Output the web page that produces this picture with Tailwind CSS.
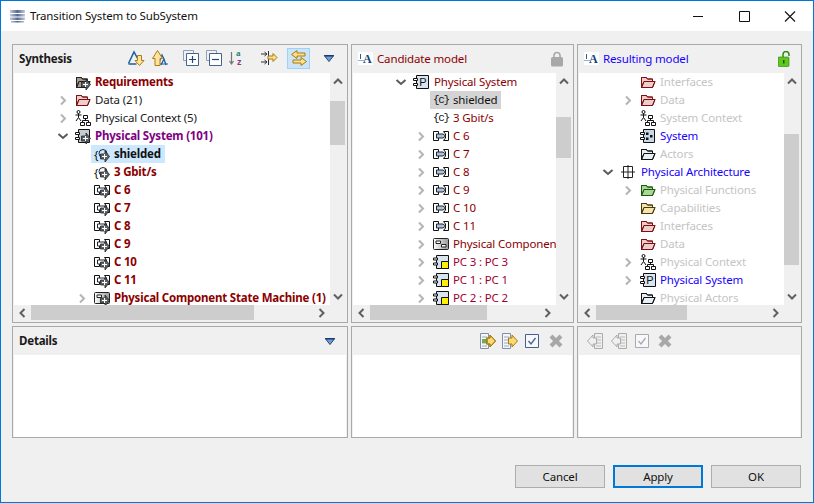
<!DOCTYPE html>
<html lang="en">
<head>
<meta charset="utf-8">
<title>Transition System to SubSystem</title>
<script src="https://cdn.jsdelivr.net/npm/@tailwindcss/browser@4"></script>
</head>
<body class="h-[503px] w-[814px] overflow-hidden border border-[#0078d7] bg-[#f0f0f0] font-['Noto_Sans',sans-serif] text-[11.5px] leading-[18px] tracking-[-0.15px] text-[#1a1a1a]">

<svg class="h-0 w-0" xmlns="http://www.w3.org/2000/svg">
  <defs>
    <linearGradient id="ti"><stop offset="0" stop-color="#c4ccdc"/><stop offset=".5" stop-color="#56688c"/><stop offset="1" stop-color="#c4ccdc"/></linearGradient>
    <linearGradient id="gs"><stop offset="0" stop-color="#fff"/><stop offset="1" stop-color="#999"/></linearGradient>
  </defs>
  <symbol id="chev-r" viewBox="0 0 16 16"><path d="M6 4.500l4 4-4 4" fill="none" stroke="#b4b4b4" stroke-width="2"/></symbol>
  <symbol id="chev-d" viewBox="0 0 16 16"><path d="M3.500 6l4.500 4 4.500-4" fill="none" stroke="#5a5a5a" stroke-width="2"/></symbol>
  <symbol id="sb-u" viewBox="0 0 16 16"><path d="M4 10l4-4 4 4" fill="none" stroke="#606060" stroke-width="2"/></symbol>
  <symbol id="sb-d" viewBox="0 0 16 16"><path d="M4 6l4 4 4-4" fill="none" stroke="#606060" stroke-width="2"/></symbol>
  <symbol id="sb-l" viewBox="0 0 16 16"><path d="M10 4L6 8l4 4" fill="none" stroke="#606060" stroke-width="2"/></symbol>
  <symbol id="sb-r" viewBox="0 0 16 16"><path d="M6 4l4 4-4 4" fill="none" stroke="#606060" stroke-width="2"/></symbol>
  <symbol id="folder" viewBox="0 0 16 16"><path d="M1.500 13.500v-10h5l1 1.500h5v2.500" fill="currentColor"/><path d="M1.500 13.500L4 7.500h11l-2.500 6z" fill="currentColor"/><path d="M1.500 13.500v-10h5l1 1.500h5v2.500M1.500 13.500L4 7.500h11l-2.500 6z" fill="none"/></symbol>
  <symbol id="ctx" viewBox="0 0 16 16"><g fill="none" stroke="#111"><circle cx="3.500" cy="2" r="1.500"/><path d="M3.500 3.500v4M.5 5h6M3.500 7.500L1 11M3.500 7.500L6 11M8.500 5.500h4v3h-4zM5.500 12.500h4v3h-4zM11.500 12.500h4v3h-4zM10.500 8.500v2M7.500 12.500v-2h6v2"/></g></symbol>
  <symbol id="ov" viewBox="0 0 16 16"><path d="M6.500 8h4.500V5l4.500 5.500L11 16v-3H6.500z" fill="#5c6468" stroke="#222" stroke-width=".8"/><path d="M8 10.500h5M10.500 8v5" stroke="#fff"/></symbol>
  <symbol id="comp" viewBox="0 0 16 16"><path d="M3.500 1.500h11v13h-11z" fill="currentColor" stroke="#111"/><path d="M.5 4.500h4v2h-4zM.5 9.500h4v2h-4z" fill="#fff" stroke="#111"/></symbol>
  <symbol id="cx" viewBox="0 0 16 16"><path d="M.5 3.500h5v9h-5zM15.500 3.500h-5l2 2.500v4l-2 2.500h5z" fill="#fff" stroke="#111"/><path d="M3.500 6h6.500l2.500 2-2.500 2H3.500z" fill="currentColor" stroke="#223"/></symbol>
  <symbol id="state" viewBox="0 0 16 16"><path d="M.5 3.500q0-1 1-1h13q1 0 1 1v9q0 1-1 1h-13q-1 0-1-1z" fill="url(#gs)" stroke="#222"/><path d="M3 5h4.500v2.500H3zM8.500 8.500H13V11H8.500z" fill="#fff" stroke="#222"/></symbol>
  <symbol id="pc" viewBox="0 0 16 16"><path d="M3.500 1.500h12v13h-12z" fill="#d8e4ee" stroke="#111"/><path d="M.5 4h4v2h-4zM.5 9h4v2h-4z" fill="#fff" stroke="#111"/><path d="M8.500 7.500h7v7h-7z" fill="#ffef00" stroke="#111"/></symbol>
  <symbol id="la" viewBox="0 0 16 16"><rect width="15" height="13" y="1" fill="#fff"/><path d="M0 9.500h6" stroke="#8fb4d8"/><path d="M2.500 3v5" stroke="#2d5d8c"/><text x="5" y="12" font-family="Liberation Serif" font-weight="700" font-size="12" fill="#12427a">A</text></symbol>
  <symbol id="tree-up" viewBox="0 0 18 18"><path d="M1.500 14.500L7 3l5 9" fill="none" stroke="#1c5f9e" stroke-width="1.500"/><path d="M1.500 15h8" stroke="#1c5f9e" stroke-width="1.500"/></symbol>
  <symbol id="ar-d" viewBox="0 0 18 18"><path d="M10.500 6.500h4v5h2.500l-4.500 5-4.500-5h2.500z" fill="#fde3a0" stroke="#b07a10"/></symbol>
  <symbol id="ar-u" viewBox="0 0 18 18"><path d="M4 16.500v-7H1.500L6.500 1.500l5 8H9v7z" fill="#fde3a0" stroke="#b07a10"/></symbol>
  <symbol id="stack" viewBox="0 0 16 16"><path d="M.5.500h10v10H.5z" fill="#eef2f6" stroke="#8fa0b4"/><path d="M3.500 3.500h12v12h-12z" fill="#fff" stroke="#44648c"/></symbol>
  <symbol id="x" viewBox="0 0 16 16"><path d="M3 3l10 10M13 3L3 13" stroke="#a8a8a8" stroke-width="4.200"/></symbol>
  <symbol id="chk" viewBox="0 0 14 14"><path d="M.5.500h13v13H.5z" fill="#f6f8fb" stroke="currentColor"/><path d="M3.500 7l2.500 3 4.500-6" fill="none" stroke="currentColor" stroke-width="1.300"/></symbol>
  <symbol id="copy-r" viewBox="0 0 16 16"><path d="M.5.500h8v15h-8z" fill="#f4f6fa" stroke="#8090a8"/><path d="M2 4h5M2 7h5M2 10h5M2 13h5" stroke="#9aa8b8"/><path d="M6.500 5h3.500V2l5.500 6-5.500 6v-3H6.500z" fill="#fbd878" stroke="#a87a10"/></symbol>
  <symbol id="copy-l" viewBox="0 0 16 16"><path d="M7.500.500h8v15h-8z" fill="#f0f0f0" stroke="#aaa"/><path d="M9 4h5M9 7h5M9 10h5M9 13h5" stroke="#bbb"/><path d="M9.500 5H6V2L.5 8 6 14v-3h3.500z" fill="#f0f0f0" stroke="#aaa"/></symbol>
  <symbol id="drop" viewBox="0 0 12 8"><path d="M.5.500h11L6 7.500z" fill="#6f9fd0" stroke="#14346e"/><path d="M1 1h10" stroke="#14346e" stroke-width="1.500"/></symbol>
  <symbol id="ph" viewBox="0 0 16 16"><path d="M3.500 1.500h12v13h-12z" fill="#d8e4f0" stroke="#111"/><path d="M.5 4.500h4v2h-4zM.5 9.500h4v2h-4z" fill="#fff" stroke="#111"/><text x="6.300" y="12" font-family="Liberation Sans" font-size="11" fill="#111">P</text></symbol>
</svg>

<!-- Title bar -->
<header class="flex h-[30px] items-center bg-white">
  <svg class="ml-[9px] h-4 w-4" viewBox="0 0 16 16"><path d="M0 2h15v3H0zM0 6h15v2.500H0zM0 9.500h15V12H0zM1 13h13v1.500H1z" fill="url(#ti)"/></svg>
  <span class="ml-[4px] text-[#111]">Transition System to SubSystem</span>
  <div class="ml-auto flex items-center">
    <svg class="h-[30px] w-[46px]" viewBox="0 0 46 30"><path d="M18 15.500h10" stroke="#111"/></svg>
    <svg class="h-[30px] w-[46px]" viewBox="0 0 46 30"><path d="M18.500 10.500h10v10h-10z" fill="none" stroke="#111"/></svg>
    <svg class="h-[30px] w-[46px]" viewBox="0 0 46 30"><path d="M18 10.500l10 10M28 10.500l-10 10" stroke="#111" stroke-width="1.100"/></svg>
  </div>
</header>

<!-- Panels -->
<main class="ml-[11px] mt-[13px] grid grid-cols-[336px_223px_225px] grid-rows-[279px_112px] gap-[3px]">

  <!-- Synthesis -->
  <section class="flex flex-col border border-[#a9a9a9] px-[1px]">
    <div class="relative flex h-[28px] items-center">
      <span class="ml-[5px] font-bold tracking-[-0.2px]">Synthesis</span>
      <div class="absolute left-[113px] top-[2px] flex h-[22px] items-center">
        <svg class="h-[18px] w-[18px] shrink-0" viewBox="0 0 18 18"><use href="#tree-up"/><use href="#ar-d"/></svg>
        <svg class="ml-[6px] h-[18px] w-[18px] shrink-0" viewBox="0 0 18 18"><path d="M7 16L11 6l2 4 2 6M10 16l3-6" fill="none" stroke="#1c5f9e" stroke-width="1.300"/><path d="M4 15h13" stroke="#1c5f9e"/><use href="#ar-u"/></svg>
        <svg class="ml-[14px] h-4 w-4 shrink-0" viewBox="0 0 16 16"><use href="#stack"/><path d="M6 9.500h7M9.500 6v7" stroke="#1c4a80" stroke-width="1.200"/></svg>
        <svg class="ml-[7px] h-4 w-4 shrink-0" viewBox="0 0 16 16"><use href="#stack"/><path d="M6 9.500h7" stroke="#1c4a80" stroke-width="1.200"/></svg>
        <svg class="ml-[7px] h-[18px] w-[18px] shrink-0 overflow-visible" viewBox="0 0 18 18"><path d="M2.500 3v12M.5 12l2 3 2-3" fill="none" stroke="#777" stroke-width="1.200"/><text x="7" y="7" font-family="Liberation Serif" font-weight="700" font-size="9" fill="#25807a">a</text><text x="8" y="16" font-family="Liberation Sans" font-weight="700" font-size="9" fill="#8b3a8f">z</text></svg>
        <svg class="ml-[13px] h-[18px] w-[18px] shrink-0" viewBox="0 0 18 18"><path d="M1 5h6M1 13h6M8.500 2v14" stroke="#333"/><path d="M4.500 3l2.500 2-2.500 2M4.500 11l2.500 2-2.500 2" fill="none" stroke="#333"/><path d="M8 7h5V4.500l4 4-4 4V10H8z" fill="#fde08c" stroke="#a87a10"/></svg>
        <div class="ml-[9px] flex h-[21px] w-[23px] shrink-0 items-center justify-center border border-[#99d1ff] bg-[#cce4f7]">
          <svg class="h-[18px] w-[18px]" viewBox="0 0 18 18"><path d="M7 1.500L1.500 5.500 7 9.500V7h8V4H7z" fill="#fde08c" stroke="#a87a10"/><path d="M11 8.500l5.500 4-5.500 4V14H3v-3h8z" fill="#fde08c" stroke="#a87a10"/></svg>
        </div>
        <svg class="ml-[13px] h-[7px] w-3 shrink-0" viewBox="0 0 12 8"><use href="#drop"/></svg>
      </div>
    </div>
    <div class="flex h-[232px]">
      <div class="h-full w-[316px] overflow-hidden whitespace-nowrap bg-white font-bold tracking-[-0.2px] text-[#8b0000]">
        <div class="flex h-[18px] items-center pl-[61px]"><svg class="h-4 w-4 shrink-0 text-[#a89a90] stroke-[#222]" viewBox="0 0 16 16"><use href="#folder"/><use href="#ov"/></svg><span class="ml-1">Requirements</span></div>
        <div class="flex h-[18px] items-center pl-[41px]"><svg class="h-4 w-4 shrink-0"><use href="#chev-r"/></svg><svg class="ml-1 h-4 w-4 shrink-0 text-[#f0cccc] stroke-[#7a1010]"><use href="#folder"/></svg><span class="ml-1 font-normal tracking-[-0.15px] text-[#1a1a1a]">Data (21)</span></div>
        <div class="flex h-[18px] items-center pl-[41px]"><svg class="h-4 w-4 shrink-0"><use href="#chev-r"/></svg><svg class="ml-1 h-4 w-4 shrink-0"><use href="#ctx"/></svg><span class="ml-1 font-normal tracking-[-0.15px] text-[#1a1a1a]">Physical Context (5)</span></div>
        <div class="flex h-[18px] items-center pl-[41px]"><svg class="h-4 w-4 shrink-0"><use href="#chev-d"/></svg><svg class="ml-1 h-4 w-4 shrink-0 text-[#c4cdd4]" viewBox="0 0 16 16"><use href="#comp"/><use href="#ov"/></svg><span class="ml-1 text-[#800080]">Physical System (101)</span></div>
        <div class="flex h-[18px] items-center pl-[77px]"><span class="flex h-[18px] items-center bg-[#cce8ff] pl-[3px] pr-[4px]"><span class="relative h-4 w-4 shrink-0 text-[#111]"><span class="font-normal leading-4">{</span><svg class="absolute left-0 top-0 h-4 w-4" viewBox="0 0 16 16"><circle cx="9" cy="7.500" r="4" fill="none" stroke="#222"/><use href="#ov"/></svg></span><span class="ml-1 text-[#111]">shielded</span></span></div>
        <div class="flex h-[18px] items-center pl-[80px]"><span class="relative h-4 w-4 shrink-0 text-[#111]"><span class="font-normal leading-4">{</span><svg class="absolute left-0 top-0 h-4 w-4" viewBox="0 0 16 16"><circle cx="9" cy="7.500" r="4" fill="none" stroke="#222"/><use href="#ov"/></svg></span><span class="ml-1">3 Gbit/s</span></div>
        <div class="flex h-[18px] items-center pl-[80px]"><svg class="h-4 w-4 shrink-0 text-white" viewBox="0 0 16 16"><use href="#cx"/><use href="#ov"/></svg><span class="ml-1">C 6</span></div>
        <div class="flex h-[18px] items-center pl-[80px]"><svg class="h-4 w-4 shrink-0 text-white" viewBox="0 0 16 16"><use href="#cx"/><use href="#ov"/></svg><span class="ml-1">C 7</span></div>
        <div class="flex h-[18px] items-center pl-[80px]"><svg class="h-4 w-4 shrink-0 text-white" viewBox="0 0 16 16"><use href="#cx"/><use href="#ov"/></svg><span class="ml-1">C 8</span></div>
        <div class="flex h-[18px] items-center pl-[80px]"><svg class="h-4 w-4 shrink-0 text-white" viewBox="0 0 16 16"><use href="#cx"/><use href="#ov"/></svg><span class="ml-1">C 9</span></div>
        <div class="flex h-[18px] items-center pl-[80px]"><svg class="h-4 w-4 shrink-0 text-white" viewBox="0 0 16 16"><use href="#cx"/><use href="#ov"/></svg><span class="ml-1">C 10</span></div>
        <div class="flex h-[18px] items-center pl-[80px]"><svg class="h-4 w-4 shrink-0 text-white" viewBox="0 0 16 16"><use href="#cx"/><use href="#ov"/></svg><span class="ml-1">C 11</span></div>
        <div class="flex h-[18px] items-center pl-[60px]"><svg class="h-4 w-4 shrink-0"><use href="#chev-r"/></svg><svg class="ml-1 h-4 w-4 shrink-0" viewBox="0 0 16 16"><use href="#state"/><use href="#ov"/></svg><span class="ml-1">Physical Component State Machine (1)</span></div>
      </div>
      <div class="flex w-[16px] flex-col">
        <svg class="h-[17px] w-4 shrink-0"><use href="#sb-u"/></svg>
        <div class="flex-1"><div class="mt-[11px] h-[44px] w-[15px] bg-[#cdcdcd]"></div></div>
        <svg class="h-[17px] w-4 shrink-0"><use href="#sb-d"/></svg>
      </div>
    </div>
    <div class="flex h-[16px] w-[316px] items-center">
      <svg class="h-4 w-[17px] shrink-0"><use href="#sb-l"/></svg>
      <div class="flex h-[15px] flex-1 self-start"><div class="h-[15px] w-[223px] bg-[#cdcdcd]"></div></div>
      <svg class="h-4 w-[17px] shrink-0"><use href="#sb-r"/></svg>
    </div>
  </section>

  <!-- Candidate model -->
  <section class="flex flex-col border border-[#a9a9a9] px-[1px]">
    <div class="flex h-[28px] items-center">
      <svg class="ml-[5px] h-4 w-4"><use href="#la"/></svg>
      <span class="ml-[3px] text-[#8b0000]">Candidate model</span>
      <svg class="ml-auto mr-[9px] h-4 w-[12px]" viewBox="0 0 12 16"><path d="M3 7V4.500a3 3 0 0 1 6 0V7" fill="none" stroke="#a8a8a8" stroke-width="1.600"/><rect y="6" width="12" height="9.500" rx="1.500" fill="#a8a8a8"/></svg>
    </div>
    <div class="flex h-[232px]">
      <div class="h-full w-[203px] overflow-hidden whitespace-nowrap bg-white text-[#8b0000]">
        <div class="flex h-[18px] items-center pl-[40px]"><svg class="h-4 w-4 shrink-0"><use href="#chev-d"/></svg><svg class="ml-1 h-4 w-4 shrink-0"><use href="#ph"/></svg><span class="ml-[5px]">Physical System</span></div>
        <div class="flex h-[18px] items-center pl-[77px]"><span class="flex h-[18px] items-center bg-[#d4d4d4] pl-[3px] pr-[4px]"><span class="w-4 shrink-0 font-['Liberation_Mono',monospace] text-[11px] tracking-[-1.4px] text-[#111]">{c}</span><span class="ml-[4px] text-[#111]">shielded</span></span></div>
        <div class="flex h-[18px] items-center pl-[80px]"><span class="w-4 shrink-0 font-['Liberation_Mono',monospace] text-[11px] tracking-[-1.4px] text-[#111]">{c}</span><span class="ml-1">3 Gbit/s</span></div>
        <div class="flex h-[18px] items-center pl-[60px]"><svg class="h-4 w-4 shrink-0"><use href="#chev-r"/></svg><svg class="ml-1 h-4 w-4 shrink-0 text-[#a8c4d8]"><use href="#cx"/></svg><span class="ml-1">C 6</span></div>
        <div class="flex h-[18px] items-center pl-[60px]"><svg class="h-4 w-4 shrink-0"><use href="#chev-r"/></svg><svg class="ml-1 h-4 w-4 shrink-0 text-[#a8c4d8]"><use href="#cx"/></svg><span class="ml-1">C 7</span></div>
        <div class="flex h-[18px] items-center pl-[60px]"><svg class="h-4 w-4 shrink-0"><use href="#chev-r"/></svg><svg class="ml-1 h-4 w-4 shrink-0 text-[#a8c4d8]"><use href="#cx"/></svg><span class="ml-1">C 8</span></div>
        <div class="flex h-[18px] items-center pl-[60px]"><svg class="h-4 w-4 shrink-0"><use href="#chev-r"/></svg><svg class="ml-1 h-4 w-4 shrink-0 text-[#a8c4d8]"><use href="#cx"/></svg><span class="ml-1">C 9</span></div>
        <div class="flex h-[18px] items-center pl-[60px]"><svg class="h-4 w-4 shrink-0"><use href="#chev-r"/></svg><svg class="ml-1 h-4 w-4 shrink-0 text-[#a8c4d8]"><use href="#cx"/></svg><span class="ml-1">C 10</span></div>
        <div class="flex h-[18px] items-center pl-[60px]"><svg class="h-4 w-4 shrink-0"><use href="#chev-r"/></svg><svg class="ml-1 h-4 w-4 shrink-0 text-[#a8c4d8]"><use href="#cx"/></svg><span class="ml-1">C 11</span></div>
        <div class="flex h-[18px] items-center pl-[60px]"><svg class="h-4 w-4 shrink-0"><use href="#chev-r"/></svg><svg class="ml-1 h-4 w-4 shrink-0"><use href="#state"/></svg><span class="ml-1">Physical Component State Machine</span></div>
        <div class="flex h-[18px] items-center pl-[60px] text-[#a00030]"><svg class="h-4 w-4 shrink-0"><use href="#chev-r"/></svg><svg class="ml-1 h-4 w-4 shrink-0"><use href="#pc"/></svg><span class="ml-1">PC 3 : PC 3</span></div>
        <div class="flex h-[18px] items-center pl-[60px] text-[#a00030]"><svg class="h-4 w-4 shrink-0"><use href="#chev-r"/></svg><svg class="ml-1 h-4 w-4 shrink-0"><use href="#pc"/></svg><span class="ml-1">PC 1 : PC 1</span></div>
        <div class="flex h-[18px] items-center pl-[60px] text-[#a00030]"><svg class="h-4 w-4 shrink-0"><use href="#chev-r"/></svg><svg class="ml-1 h-4 w-4 shrink-0"><use href="#pc"/></svg><span class="ml-1">PC 2 : PC 2</span></div>
      </div>
      <div class="flex w-[16px] flex-col">
        <svg class="h-[17px] w-4 shrink-0"><use href="#sb-u"/></svg>
        <div class="flex-1"><div class="mt-[27px] h-[41px] w-[15px] bg-[#cdcdcd]"></div></div>
        <svg class="h-[17px] w-4 shrink-0"><use href="#sb-d"/></svg>
      </div>
    </div>
    <div class="flex h-[16px] w-[203px] items-center">
      <svg class="h-4 w-[17px] shrink-0"><use href="#sb-l"/></svg>
      <div class="flex h-[15px] flex-1 self-start"><div class="h-[15px] w-[117px] bg-[#cdcdcd]"></div></div>
      <svg class="h-4 w-[17px] shrink-0"><use href="#sb-r"/></svg>
    </div>
  </section>

  <!-- Resulting model -->
  <section class="flex flex-col border border-[#a9a9a9] px-[1px]">
    <div class="flex h-[28px] items-center">
      <svg class="ml-[5px] h-4 w-4"><use href="#la"/></svg>
      <span class="ml-[3px] text-[#1a00ff]">Resulting model</span>
      <svg class="ml-auto mr-[10px] h-4 w-[12px]" viewBox="0 0 12 16"><path d="M5 6V3.500a3 3 0 0 1 6 0V5" fill="none" stroke="#2c8a10" stroke-width="1.500"/><rect y="6" width="11" height="9.500" rx="1" fill="#5fc81e" stroke="#2c7a10" stroke-width=".6"/><rect x="5" y="9" width="1.500" height="3.500" fill="#1b5a08"/></svg>
    </div>
    <div class="flex h-[232px]">
      <div class="h-full w-[205px] overflow-hidden whitespace-nowrap bg-white text-[#c4c4c4]">
        <div class="flex h-[18px] items-center pl-[61px]"><svg class="h-4 w-4 shrink-0 text-[#f0cccc] stroke-[#7a1010]"><use href="#folder"/></svg><span class="ml-1">Interfaces</span></div>
        <div class="flex h-[18px] items-center pl-[41px]"><svg class="h-4 w-4 shrink-0"><use href="#chev-r"/></svg><svg class="ml-1 h-4 w-4 shrink-0 text-[#f0cccc] stroke-[#7a1010]"><use href="#folder"/></svg><span class="ml-1">Data</span></div>
        <div class="flex h-[18px] items-center pl-[61px]"><svg class="h-4 w-4 shrink-0"><use href="#ctx"/></svg><span class="ml-1">System Context</span></div>
        <div class="flex h-[18px] items-center pl-[61px]"><svg class="h-4 w-4 shrink-0 text-[#c8d8e8]" viewBox="0 0 16 16"><use href="#comp"/><path d="M6 4.500h2.500v2.500H6zM10 7h2.500v2.500H10zM6 9.500h2.500V12H6z" fill="#111"/></svg><span class="ml-1 text-[#1a00ff]">System</span></div>
        <div class="flex h-[18px] items-center pl-[61px]"><svg class="h-4 w-4 shrink-0 text-[#e8f0f6] stroke-[#111]"><use href="#folder"/></svg><span class="ml-1">Actors</span></div>
        <div class="flex h-[18px] items-center pl-[21px]"><svg class="h-4 w-4 shrink-0"><use href="#chev-d"/></svg><svg class="ml-1 h-4 w-4 shrink-0" viewBox="0 0 16 16"><path d="M3.500 2.500h9v11h-9zM1 8h14M8 1v14" fill="none" stroke="#222"/></svg><span class="ml-[5px] text-[#1a00ff]">Physical Architecture</span></div>
        <div class="flex h-[18px] items-center pl-[41px]"><svg class="h-4 w-4 shrink-0"><use href="#chev-r"/></svg><svg class="ml-1 h-4 w-4 shrink-0 text-[#a8d892] stroke-[#1d5a10]"><use href="#folder"/></svg><span class="ml-1">Physical Functions</span></div>
        <div class="flex h-[18px] items-center pl-[61px]"><svg class="h-4 w-4 shrink-0 text-[#f6e4b0] stroke-[#4a3a08]"><use href="#folder"/></svg><span class="ml-1">Capabilities</span></div>
        <div class="flex h-[18px] items-center pl-[61px]"><svg class="h-4 w-4 shrink-0 text-[#f0cccc] stroke-[#7a1010]"><use href="#folder"/></svg><span class="ml-1">Interfaces</span></div>
        <div class="flex h-[18px] items-center pl-[61px]"><svg class="h-4 w-4 shrink-0 text-[#f0cccc] stroke-[#7a1010]"><use href="#folder"/></svg><span class="ml-1">Data</span></div>
        <div class="flex h-[18px] items-center pl-[41px]"><svg class="h-4 w-4 shrink-0"><use href="#chev-r"/></svg><svg class="ml-1 h-4 w-4 shrink-0"><use href="#ctx"/></svg><span class="ml-1">Physical Context</span></div>
        <div class="flex h-[18px] items-center pl-[41px]"><svg class="h-4 w-4 shrink-0"><use href="#chev-r"/></svg><svg class="ml-1 h-4 w-4 shrink-0"><use href="#ph"/></svg><span class="ml-1 text-[#1a00ff]">Physical System</span></div>
        <div class="flex h-[18px] items-center pl-[61px]"><svg class="h-4 w-4 shrink-0 text-[#e8f0f6] stroke-[#111]"><use href="#folder"/></svg><span class="ml-1">Physical Actors</span></div>
      </div>
      <div class="flex w-[16px] flex-col">
        <svg class="h-[17px] w-4 shrink-0"><use href="#sb-u"/></svg>
        <div class="flex-1"><div class="mt-[44px] h-[131px] w-[15px] bg-[#cdcdcd]"></div></div>
        <svg class="h-[17px] w-4 shrink-0"><use href="#sb-d"/></svg>
      </div>
    </div>
    <div class="flex h-[16px] w-[205px] items-center">
      <svg class="h-4 w-[17px] shrink-0"><use href="#sb-l"/></svg>
      <div class="flex h-[15px] flex-1 self-start"><div class="h-[15px] w-[91px] bg-[#cdcdcd]"></div></div>
      <svg class="h-4 w-[17px] shrink-0"><use href="#sb-r"/></svg>
    </div>
  </section>

  <!-- Details -->
  <section class="flex flex-col border border-[#a9a9a9] px-[1px]">
    <div class="flex h-[28px] items-center">
      <span class="ml-[5px] font-bold tracking-[-0.2px]">Details</span>
      <svg class="ml-auto mr-[10px] h-[7px] w-3" viewBox="0 0 12 8"><use href="#drop"/></svg>
    </div>
    <div class="flex-1 bg-white"></div>
  </section>

  <section class="flex flex-col border border-[#a9a9a9] px-[1px]">
    <div class="flex h-[28px] items-center justify-end pr-[8px]">
      <svg class="h-4 w-4" viewBox="0 0 16 16"><use href="#copy-r"/><path d="M2 6h6v4H2z" fill="#7aa84a"/><path d="M6.500 5h3.500V2l5.500 6-5.500 6v-3H6.500z" fill="none" stroke="#a87a10"/></svg>
      <svg class="ml-[6px] h-4 w-4"><use href="#copy-r"/></svg>
      <svg class="ml-[7px] h-[14px] w-[14px] text-[#465f8e]"><use href="#chk"/></svg>
      <svg class="ml-[9px] h-4 w-4"><use href="#x"/></svg>
    </div>
    <div class="flex-1 bg-white"></div>
  </section>

  <section class="flex flex-col border border-[#a9a9a9] px-[1px]">
    <div class="flex h-[28px] items-center pl-[8px]">
      <svg class="h-4 w-4"><use href="#copy-l"/></svg>
      <svg class="ml-2 h-4 w-4"><use href="#copy-l"/></svg>
      <svg class="ml-2 h-[14px] w-[14px] text-[#aaa]"><use href="#chk"/></svg>
      <svg class="ml-2 h-4 w-4"><use href="#x"/></svg>
    </div>
    <div class="flex-1 bg-white"></div>
  </section>
</main>

<!-- Buttons -->
<footer class="mr-[12px] mt-[27px] flex justify-end gap-2">
  <button class="h-[23px] w-[90px] border border-[#adadad] bg-[#e1e1e1] text-[#111]">Cancel</button>
  <button class="h-[23px] w-[90px] border-2 border-[#0078d7] bg-[#e1e1e1] text-[#111]">Apply</button>
  <button class="h-[23px] w-[90px] border border-[#adadad] bg-[#e1e1e1] text-[#111]">OK</button>
</footer>
</body>
</html>
